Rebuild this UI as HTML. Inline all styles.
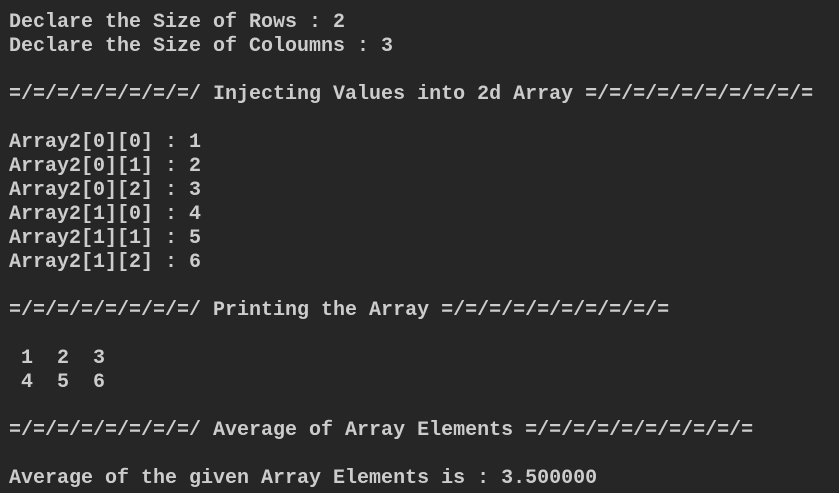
<!DOCTYPE html>
<html><head><meta charset="utf-8"><style>
html,body{margin:0;padding:0;background:#262626;width:839px;height:493px;overflow:hidden}
pre{margin:0;position:absolute;left:9px;top:11px;font-family:"Liberation Mono",monospace;font-size:20px;line-height:24px;color:#cccccc;font-weight:bold;letter-spacing:0px}
</style></head><body><pre>Declare the Size of Rows : 2
Declare the Size of Coloumns : 3

=/=/=/=/=/=/=/=/ Injecting Values into 2d Array =/=/=/=/=/=/=/=/=/=

Array2[0][0] : 1
Array2[0][1] : 2
Array2[0][2] : 3
Array2[1][0] : 4
Array2[1][1] : 5
Array2[1][2] : 6

=/=/=/=/=/=/=/=/ Printing the Array =/=/=/=/=/=/=/=/=/=

 1  2  3
 4  5  6

=/=/=/=/=/=/=/=/ Average of Array Elements =/=/=/=/=/=/=/=/=/=

Average of the given Array Elements is : 3.500000</pre></body></html>
